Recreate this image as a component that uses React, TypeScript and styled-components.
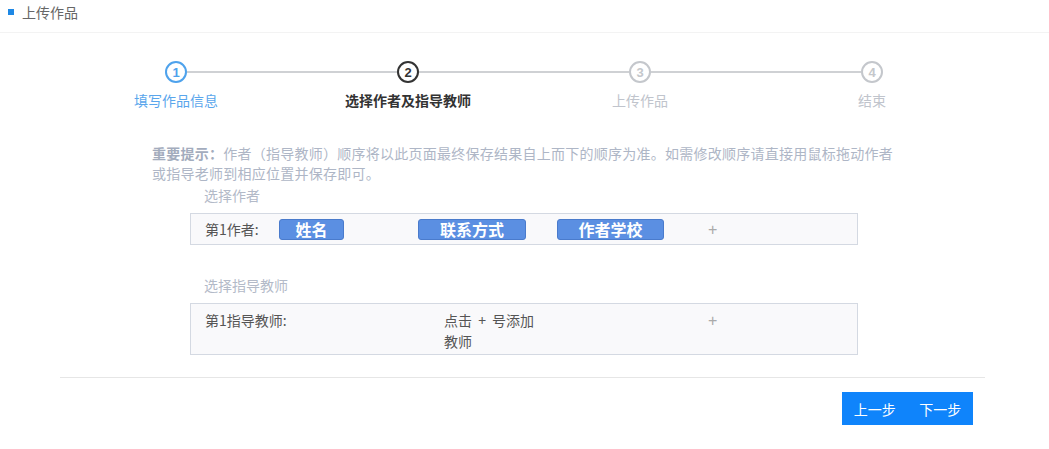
import React from 'react'
import styled, { createGlobalStyle } from 'styled-components'

const GlobalStyle = createGlobalStyle`
    body {
        margin: 0;
        background: #fff;
        font-family: "Noto Sans CJK SC", "Noto Sans", sans-serif;
    }
`

type StepState = 'done' | 'active' | 'todo'

const steps: { label: string; state: StepState }[] = [
    { label: '填写作品信息', state: 'done' },
    { label: '选择作者及指导教师', state: 'active' },
    { label: '上传作品', state: 'todo' },
    { label: '结束', state: 'todo' },
]

const stepColor = {
    done: '#4ea2ec',
    active: '#333333',
    todo: '#c4c7cc',
}

const labelColor = {
    done: '#5aa6ec',
    active: '#333333',
    todo: '#c0c4cc',
}

export default function App() {
    return (
        <>
            <GlobalStyle />
            <WPage>
                <WHeader>
                    <WHeaderMark />
                    上传作品
                </WHeader>

                <WContent>
                    <WSteps>
                        {steps.map((step, i) => (
                            <WStep key={step.label}>
                                <WStepTrack>
                                    <WStepLine $off={i === 0} />
                                    <WStepCircle $state={step.state}>{i + 1}</WStepCircle>
                                    <WStepLine $off={i === steps.length - 1} />
                                </WStepTrack>
                                <WStepLabel $state={step.state}>{step.label}</WStepLabel>
                            </WStep>
                        ))}
                    </WSteps>

                    <WNotice>
                        <b>重要提示：</b>作者（指导教师）顺序将以此页面最终保存结果自上而下的顺序为准。如需修改顺序请直接用鼠标拖动作者或指导老师到相应位置并保存即可。
                    </WNotice>

                    <WSectionTitle>选择作者</WSectionTitle>
                    <WAuthorBox>
                        <WRowLabel $width={74}>第1作者:</WRowLabel>
                        <WChip $width={65}>姓名</WChip>
                        <WChip $width={108} $offset={74}>联系方式</WChip>
                        <WChip $width={107} $offset={31}>作者学校</WChip>
                        <WPlus $offset={44}>+</WPlus>
                    </WAuthorBox>

                    <WSectionTitle $spaced>选择指导教师</WSectionTitle>
                    <WTeacherBox>
                        <WRowLabel $width={239}>第1指导教师:</WRowLabel>
                        <WHint>点击 + 号添加教师</WHint>
                        <WPlus $offset={169}>+</WPlus>
                    </WTeacherBox>

                    <WDivider />

                    <WFooter>
                        <WStepButton>上一步</WStepButton>
                        <WStepButton>下一步</WStepButton>
                    </WFooter>
                </WContent>
            </WPage>
        </>
    )
}

const WPage = styled.div`
    width: 1049px;
    height: 449px;
    overflow: hidden;
`

const WHeader = styled.div`
    height: 33px;
    box-sizing: border-box;
    padding: 1px 0 0 8px;
    display: flex;
    align-items: flex-start;
    line-height: 22px;
    font-size: 14px;
    color: #666;
    border-bottom: 1px solid #f3f3f3;
`

const WHeaderMark = styled.span`
    width: 6px;
    height: 6px;
    margin: 8px 8px 0 0;
    background: #1e88e5;
`

const WContent = styled.div`
    margin-left: 60px;
    width: 928px;
`

const WSteps = styled.div`
    display: grid;
    grid-template-columns: repeat(4, 232px);
    margin-top: 28px;
`

const WStep = styled.div`
    display: flex;
    flex-direction: column;
    align-items: center;
`

const WStepTrack = styled.div`
    width: 100%;
    display: flex;
    align-items: center;
`

const WStepLine = styled.div<{ $off?: boolean }>`
    flex: 1;
    height: 2px;
    background: ${p => (p.$off ? 'transparent' : '#cfd1d4')};
`

const WStepCircle = styled.div<{ $state: StepState }>`
    width: 22px;
    height: 22px;
    box-sizing: border-box;
    border-radius: 50%;
    border: 2px solid ${p => stepColor[p.$state]};
    color: ${p => stepColor[p.$state]};
    display: flex;
    align-items: center;
    justify-content: center;
    font-size: 13px;
    font-weight: bold;
    line-height: 1;
    font-family: "Liberation Sans", sans-serif;
`

const WStepLabel = styled.div<{ $state: StepState }>`
    margin-top: 7px;
    font-size: 14px;
    line-height: 20px;
    color: ${p => labelColor[p.$state]};
    font-weight: ${p => (p.$state === 'active' ? 'bold' : 'normal')};
`

const WNotice = styled.div`
    margin: 33px 0 0 92px;
    width: 748px;
    font-size: 14px;
    letter-spacing: 0.25px;
    line-height: 20px;
    color: #aeb6c6;

    b {
        color: #a3acbd;
    }
`

const WSectionTitle = styled.div<{ $spaced?: boolean }>`
    margin: ${p => (p.$spaced ? '31px' : '3px')} 0 9px 144px;
    font-size: 14px;
    line-height: 18px;
    color: #b3bac8;
`

const WBox = styled.div`
    margin-left: 130px;
    width: 668px;
    box-sizing: border-box;
    border: 1px solid #d4d9e2;
    background: #f9f9fb;
    display: flex;
    padding-left: 14px;
    font-size: 14px;
    color: #555;
`

const WAuthorBox = styled(WBox)`
    height: 32px;
    align-items: center;
`

const WTeacherBox = styled(WBox)`
    height: 52px;
    align-items: flex-start;
    padding-top: 6px;
    line-height: 21px;
`

const WRowLabel = styled.div<{ $width: number }>`
    width: ${p => p.$width}px;
    flex-shrink: 0;
`

const WChip = styled.div<{ $width: number; $offset?: number }>`
    width: ${p => p.$width}px;
    margin-left: ${p => p.$offset || 0}px;
    height: 21px;
    box-sizing: border-box;
    flex-shrink: 0;
    border-radius: 3px;
    background: #5b8fe2;
    border: 1px solid #4a7bcc;
    color: #fff;
    font-size: 16px;
    font-weight: bold;
    line-height: 19px;
    text-align: center;
`

const WPlus = styled.div<{ $offset: number }>`
    margin-left: ${p => p.$offset}px;
    font-size: 16px;
    color: #aaa;
    font-family: "Liberation Sans", sans-serif;
    line-height: 21px;
`

const WHint = styled.div`
    width: 95px;
    flex-shrink: 0;
    color: #555;
    word-spacing: 3px;
`

const WDivider = styled.div`
    margin-top: 22px;
    width: 925px;
    height: 1px;
    background: #e6e6e6;
`

const WFooter = styled.div`
    display: flex;
    justify-content: flex-end;
    padding-right: 15px;
    margin-top: 14px;
`

const WStepButton = styled.button`
    width: 65.5px;
    height: 33px;
    border: none;
    background: #0f84fb;
    color: #fff;
    font-size: 14px;
    font-family: "Noto Sans CJK SC", sans-serif;
    padding: 0;
    cursor: pointer;
`
